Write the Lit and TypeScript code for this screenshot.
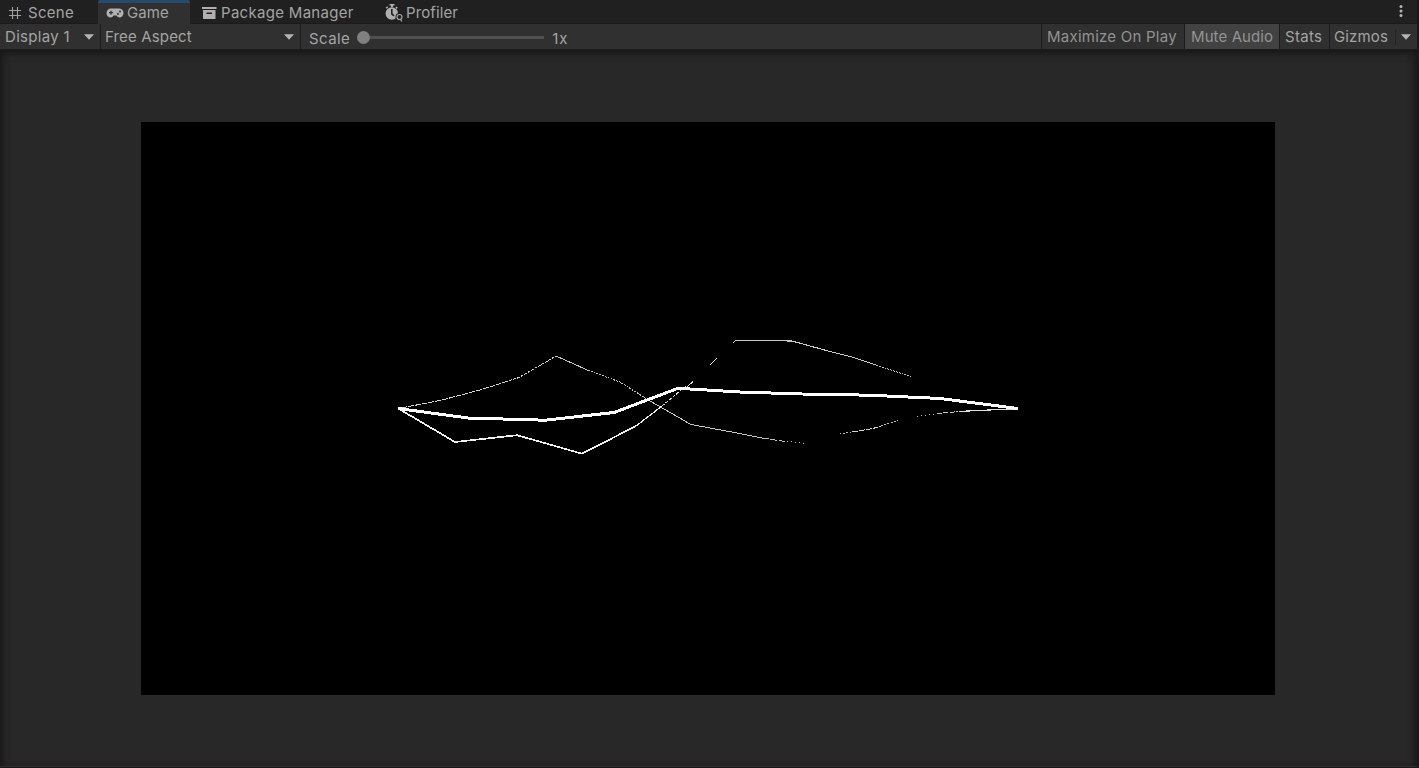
import { LitElement, html, svg, css } from "lit";
import { customElement } from "lit/decorators.js";

interface Stroke {
  points: string;
  width: number;
  color: string;
  dash?: string;
}

const strokes: Stroke[] = [
  { points: "401,408 440,400.5 478,390.5 498,384.5", width: 1, color: "#d6d6d6", dash: "6 1" },
  { points: "498,384.300 519,377.500 556,356", width: 1, color: "#d0d0d0", dash: "3 1" },
  { points: "556,356 588,370.300", width: 1, color: "#c4c4c4" },
  { points: "588,370.300 620,382 650,401", width: 1, color: "#bcbcbc", dash: "2 1" },
  { points: "650,401 691,424.500 737,433 762,438", width: 1, color: "#c8c8c8" },
  { points: "762,438 785,441.500", width: 1, color: "#c0c0c0", dash: "7 1.5" },
  { points: "787,441.5 806,443.5", width: 1, color: "#b8b8b8", dash: "1 3" },
  { points: "400,409.5 455,442 517,435.2 582,453.700 636,426", width: 1.7, color: "#f0f0f0" },
  { points: "636,426 662,406", width: 1.2, color: "#f0f0f0" },
  { points: "662,406 686,386", width: 1, color: "#d8d8d8", dash: "3 1.6" },
  { points: "686,388 693,381.5", width: 1, color: "#dddddd" },
  { points: "710,365 717,358", width: 1, color: "#dddddd" },
  { points: "733,343 735.5,340.5 792,341 830,351.5 852,357 876,365", width: 1.1, color: "#c8c8c8" },
  { points: "876,365 911,376.7", width: 1, color: "#c0c0c0", dash: "2 1" },
  { points: "840,433.8 851,432.4", width: 1, color: "#b8b8b8", dash: "1.4 1.8" },
  { points: "852,432 873,428.5 881,426", width: 1, color: "#d0d0d0", dash: "6 1" },
  { points: "881,426 898,420.2", width: 1, color: "#c0c0c0", dash: "2 1.4" },
  { points: "917,416.5 936,414", width: 1, color: "#b8b8b8", dash: "1 3" },
  { points: "937,413.6 958,411.6", width: 1, color: "#c4c4c4", dash: "5 1.5" },
  { points: "959,411.5 978,410.5 1000,409.5 1017,409", width: 1.2, color: "#e0e0e0" },
  {
    points: "398,408.5 468,418 545,420.2 614,412.5 678,388.3 740,392 802,394 870,395.2 940,398.5 1018,408.5",
    width: 3,
    color: "#ffffff",
  },
];

const gridIcon = svg`<svg width="14" height="14" viewBox="0 0 14 14" fill="none" stroke="#a0a0a0" stroke-width="1.1">
  <path d="M4.500 1v12M9.500 1v12M1 4.500h12M1 9.500h12"/></svg>`;

const padIcon = svg`<svg width="18" height="12" viewBox="0 0 18 12">
  <path d="M5 1.500h8a4.500 4.500 0 0 1 4.500 4.500c0 2.700-1.800 4.500-4 4.500-1.500 0-2.300-1-3-2h-3c-.7 1-1.500 2-3 2-2.200 0-4-1.800-4-4.500A4.500 4.500 0 0 1 5 1.500z" fill="#b0b0b0"/>
  <path d="M3 5.700h4M5 3.700v4" stroke="#303030" stroke-width="1.200"/>
  <circle cx="12" cy="7" r="1" fill="#303030"/><circle cx="14" cy="4.600" r="1" fill="#303030"/></svg>`;

const boxIcon = svg`<svg width="15" height="13" viewBox="0 0 15 13">
  <path d="M0 0h14.500v2H0zM1 3h12.500v9H1z" fill="#b0b0b0"/><path d="M4.500 5.500h5.500v1.500H4.500z" fill="#202020"/></svg>`;

const watchIcon = svg`<svg width="19" height="18" viewBox="0 0 19 18">
  <path d="M4.500 0h5v1.600h-1.500V3h-2V1.600H4.500z" fill="#b0b0b0"/>
  <circle cx="6.800" cy="9.500" r="6.200" fill="#b0b0b0"/>
  <path d="M1.200 4.300l1.500-1.500M10.900 3l1.400 1.400" stroke="#b0b0b0" stroke-width="1.500"/>
  <path d="M6.800 5v4.800l2.200 2" stroke="#202020" stroke-width="1.600" fill="none"/>
  <circle cx="14.500" cy="13" r="4" fill="#202020"/>
  <circle cx="14.500" cy="13" r="2.500" fill="none" stroke="#a4a4a4" stroke-width="1.200"/>
  <path d="M15.500 15l1.300 2.500" stroke="#a4a4a4" stroke-width="1.300"/></svg>`;

const arrow = svg`<svg class="arrow" width="10" height="6" viewBox="0 0 10 6"><path d="M0 .3h10L5 5.700z" fill="#b4b4b4"/></svg>`;

@customElement("app-root")
export class AppRoot extends LitElement {
  static styles = css`
    :host {
      display: flex;
      flex-direction: column;
      box-sizing: border-box;
      height: 768px;
      padding-right: 2px;
      background: #191919;
      color: #a4a4a4;
      font: 15px/20px Inter, "Liberation Sans", sans-serif;
      letter-spacing: 0.3px;
      white-space: nowrap;
      overflow: hidden;
    }
    svg { display: block; flex: none; }
    .tabs { display: flex; height: 24px; background: #202020; box-shadow: inset 0 -1px #1b1b1b; flex: none; }
    .tab { display: flex; box-sizing: border-box; height: 24px; padding-top: 3px; }
    .scene { width: 98px; padding-left: 8px; }
    .scene svg { margin: 3px 6px 0 0; }
    .game { width: 92px; padding-left: 8px; background: #303030; border-top: 3px solid #264a6e; border-radius: 2px 2px 0 0; padding-top: 0; letter-spacing: 0.1px; }
    .game svg { margin: 4px 3px 0 0; }
    .package { width: 195px; padding-left: 12px; }
    .package svg { margin: 4px 4px 0 0; }
    .profiler svg { margin: 1px 2px 0 0; }
    .profiler { letter-spacing: 0.1px; }
    .menu { margin: 5px 14px 0 auto; }
    .toolbar { display: flex; box-sizing: border-box; height: 26px; background: #303030; border-bottom: 1px solid #1c1c1c; flex: none; }
    .cell { display: flex; box-sizing: border-box; padding: 3px 0 0 5px; height: 25px; border-right: 1px solid #1c1c1c; }
    .arrow { margin: 7px 6px 0 auto; }
    .display { width: 101px; }
    .aspect { width: 200px; padding-left: 4px; letter-spacing: 0.15px; }
    .scale { flex: 1; padding: 5px 0 0 8px; letter-spacing: 0.4px; }
    .slider { display: flex; align-items: center; width: 187px; height: 14px; margin: 1px 8px 0 7px; }
    .knob { width: 13px; height: 13px; border-radius: 50%; background: #808080; }
    .line { flex: 1; height: 3px; background: #505050; }
    .factor { letter-spacing: 1px; }
    .maximize { width: 143px; color: #929292; letter-spacing: 0.24px; }
    .mute { width: 95px; padding-left: 6px; background: #424242; color: #929292; letter-spacing: 0.1px; }
    .stats { width: 50px; }
    .gizmos { width: 87px; padding-left: 4px; border-right: 0; letter-spacing: 0.15px; }
    .split { width: 1px; height: 15px; margin: 3px 0 0 auto; background: #242424; }
    .gizmos .arrow { margin: 7px 6px 0 5px; }
    .stage {
      flex: 1;
      display: flex;
      align-items: flex-start;
      box-sizing: border-box;
      padding: 72px 0 0 141px;
      background: #282828;
      border-bottom: 1px solid #302c30;
      margin-bottom: 1px;
      box-shadow: inset 0 8px 9px -5px #161616, inset 7px 0 9px -5px #191919, inset -7px 0 9px -5px #191919;
    }
    .view { background: #000; }
  `;

  render() {
    return html`
      <div class="tabs">
        <div class="tab scene">${gridIcon}<span>Scene</span></div>
        <div class="tab game">${padIcon}<span>Game</span></div>
        <div class="tab package">${boxIcon}<span>Package Manager</span></div>
        <div class="tab profiler">${watchIcon}<span>Profiler</span></div>
        <svg class="menu" width="4" height="13" viewBox="0 0 4 13" fill="#b4b4b4">
          <circle cx="2" cy="1.600" r="1.500"/><circle cx="2" cy="6.100" r="1.500"/><circle cx="2" cy="10.600" r="1.500"/>
        </svg>
      </div>
      <div class="toolbar">
        <div class="cell display"><span>Display 1</span>${arrow}</div>
        <div class="cell aspect"><span>Free Aspect</span>${arrow}</div>
        <div class="cell scale">
          <span>Scale</span>
          <div class="slider"><div class="knob"></div><div class="line"></div></div>
          <span class="factor">1x</span>
        </div>
        <div class="cell maximize">Maximize On Play</div>
        <div class="cell mute">Mute Audio</div>
        <div class="cell stats">Stats</div>
        <div class="cell gizmos"><span>Gizmos</span><div class="split"></div>${arrow}</div>
      </div>
      <div class="stage">
        <svg class="view" width="1134" height="573" viewBox="141 122 1134 573" fill="none">
          ${strokes.map(
            (s) => svg`<polyline points=${s.points} stroke=${s.color} stroke-width=${s.width}
              stroke-dasharray=${s.dash ?? "none"} shape-rendering="crispEdges"/>`
          )}
        </svg>
      </div>
    `;
  }
}
